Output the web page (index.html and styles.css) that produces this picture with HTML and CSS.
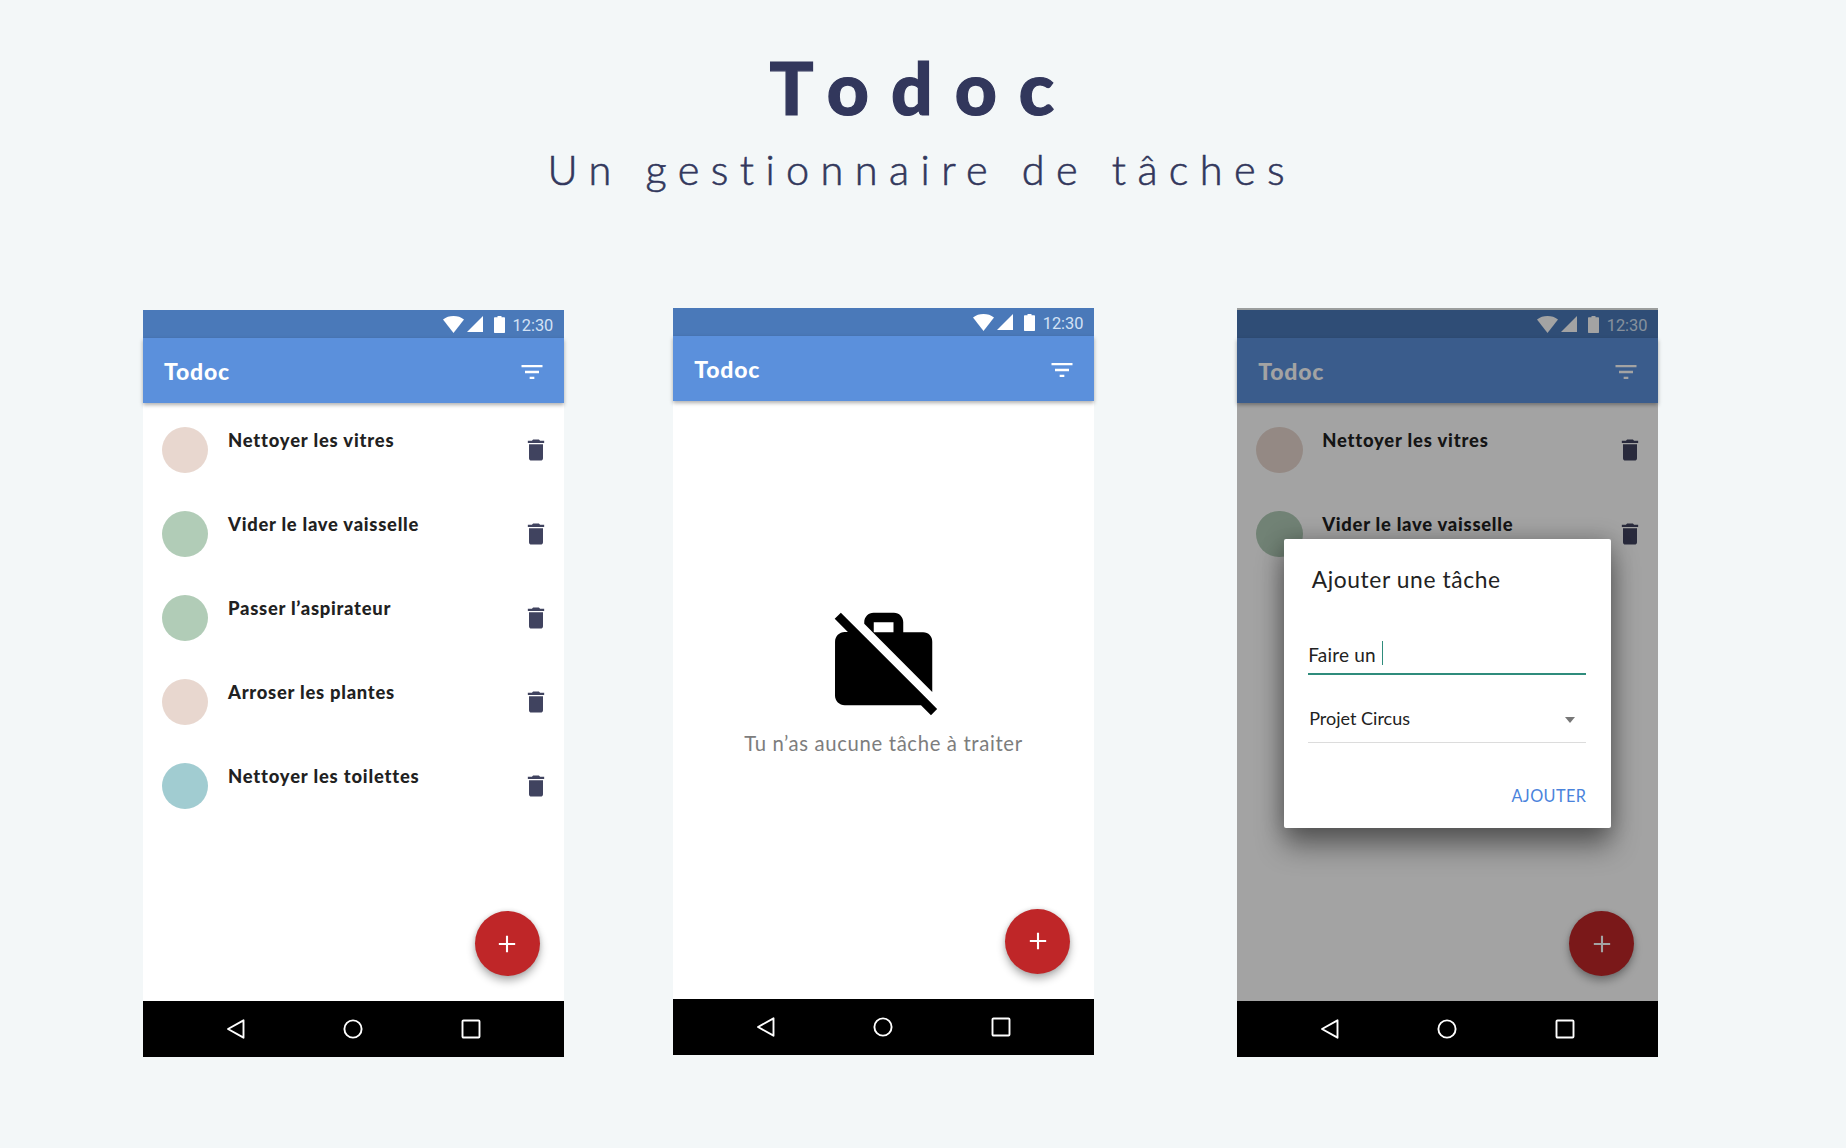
FILE: index.html
```html
<!DOCTYPE html>
<html lang="fr">
<head>
<meta charset="utf-8">
<title>Todoc</title>
<link rel="stylesheet" href="styles.css">
</head>
<body>
<svg class="sprite" aria-hidden="true">
  <symbol id="wifi" viewBox="0 0 21 17"><path d="M0 3.400C3 1.200 6.600 0 10.500 0S18 1.200 21 3.400L10.500 17z"/></symbol>
  <symbol id="signal" viewBox="0 0 16 16"><path d="M0 16H16V0z"/></symbol>
  <symbol id="battery" viewBox="0 0 11 17"><path d="M3.500 0h4v1.200H10.300a.7.7 0 0 1 .7.7V16.300a.7.7 0 0 1-.7.7H.7a.7.7 0 0 1-.7-.7V1.900a.7.7 0 0 1 .7-.7h2.800z"/></symbol>
  <symbol id="filter" viewBox="0 0 24 24"><path d="M10 18h4v-2h-4v2zM3 6v2h18V6H3zm3 7h12v-2H6v2z"/></symbol>
  <symbol id="trash" viewBox="0 0 24 24"><path d="M6 19c0 1.100.9 2 2 2h8c1.100 0 2-.9 2-2V7H6v12zM19 4h-3.500l-1-1h-5l-1 1H5v2h14V4z"/></symbol>
  <symbol id="plus" viewBox="0 0 24 24"><path d="M19 12.900h-6.100V19h-1.800v-6.100H5v-1.800h6.100V5h1.800v6.100H19z"/></symbol>
  <symbol id="back" viewBox="0 0 20 22"><path d="M17.500 2.300V19.700L2 11z"/></symbol>
  <symbol id="home" viewBox="0 0 20 20"><circle cx="10" cy="10" r="8.600"/></symbol>
  <symbol id="recent" viewBox="0 0 20 20"><rect x="1.500" y="1.500" width="17" height="17" rx="1"/></symbol>
  <symbol id="work-off" viewBox="0 0 24 24"><path d="M23 21.740l-1.460-1.460L7.210 5.950 3.250 1.990 1.990 3.250l2.700 2.700h-.64c-1.110 0-1.990.89-1.990 2l-.01 11c0 1.110.89 2 2 2h15.640L21.740 23 23 21.740zM22 7.950c.05-1.110-.84-2-1.950-1.950h-4V3.950c0-1.110-.89-2-2-1.950h-4c-1.110-.05-2 .84-2 1.950v.32l13.950 14V7.950zM14.050 6H10V3.950h4.050V6z"/></symbol>
</svg>

<header class="hero">
  <h1 class="hero-title">Todoc</h1>
  <p class="hero-subtitle">Un gestionnaire de tâches</p>
</header>

<main class="screens">
  <section class="phone phone-list">
    <div class="status"><svg class="wifi"><use href="#wifi"/></svg><svg class="signal"><use href="#signal"/></svg><svg class="battery"><use href="#battery"/></svg><span class="time">12:30</span></div>
    <div class="appbar"><span class="app-title">Todoc</span><svg class="icon"><use href="#filter"/></svg></div>
    <div class="content">
      <ul class="tasks">
        <li class="task"><i class="dot rose"></i><span class="label wide">Nettoyer les vitres</span><svg class="icon"><use href="#trash"/></svg></li>
        <li class="task"><i class="dot green"></i><span class="label">Vider le lave vaisselle</span><svg class="icon"><use href="#trash"/></svg></li>
        <li class="task"><i class="dot green"></i><span class="label">Passer l’aspirateur</span><svg class="icon"><use href="#trash"/></svg></li>
        <li class="task"><i class="dot rose"></i><span class="label">Arroser les plantes</span><svg class="icon"><use href="#trash"/></svg></li>
        <li class="task"><i class="dot blue"></i><span class="label wide">Nettoyer les toilettes</span><svg class="icon"><use href="#trash"/></svg></li>
      </ul>
      <div class="fab"><svg class="icon"><use href="#plus"/></svg></div>
    </div>
    <div class="navbar"><svg class="back"><use href="#back"/></svg><svg class="home"><use href="#home"/></svg><svg class="recent"><use href="#recent"/></svg></div>
  </section>

  <section class="phone phone-empty">
    <div class="status"><svg class="wifi"><use href="#wifi"/></svg><svg class="signal"><use href="#signal"/></svg><svg class="battery"><use href="#battery"/></svg><span class="time">12:30</span></div>
    <div class="appbar"><span class="app-title">Todoc</span><svg class="icon"><use href="#filter"/></svg></div>
    <div class="content">
      <div class="empty"><svg class="empty-icon"><use href="#work-off"/></svg><span class="empty-text">Tu n’as aucune tâche à traiter</span></div>
      <div class="fab"><svg class="icon"><use href="#plus"/></svg></div>
    </div>
    <div class="navbar"><svg class="back"><use href="#back"/></svg><svg class="home"><use href="#home"/></svg><svg class="recent"><use href="#recent"/></svg></div>
  </section>

  <section class="phone phone-dialog">
    <div class="status"><svg class="wifi"><use href="#wifi"/></svg><svg class="signal"><use href="#signal"/></svg><svg class="battery"><use href="#battery"/></svg><span class="time">12:30</span></div>
    <div class="appbar"><span class="app-title">Todoc</span><svg class="icon"><use href="#filter"/></svg></div>
    <div class="content">
      <ul class="tasks">
        <li class="task"><i class="dot rose"></i><span class="label wide">Nettoyer les vitres</span><svg class="icon"><use href="#trash"/></svg></li>
        <li class="task"><i class="dot green"></i><span class="label">Vider le lave vaisselle</span><svg class="icon"><use href="#trash"/></svg></li>
      </ul>
      <div class="fab"><svg class="icon"><use href="#plus"/></svg></div>
    </div>
    <div class="navbar"><svg class="back"><use href="#back"/></svg><svg class="home"><use href="#home"/></svg><svg class="recent"><use href="#recent"/></svg></div>
    <div class="scrim">
      <div class="dialog">
        <h2 class="dialog-title">Ajouter une tâche</h2>
        <div class="field"><span class="field-text">Faire un</span><i class="caret"></i></div>
        <div class="select"><span class="select-text">Projet Circus</span><i class="arrow"></i></div>
        <div class="actions"><span class="action">AJOUTER</span></div>
      </div>
    </div>
  </section>
</main>
</body>
</html>
```
FILE: styles.css
```css
* { box-sizing: border-box; }
body {
  margin: 0;
  height: 1148px;
  overflow: hidden;
  background: #f3f7f8;
  font-family: Lato, "Open Sans", sans-serif;
  color: #222;
}
svg { display: block; flex: none; fill: currentColor; }
.sprite { display: none; }

.hero {
  height: 308px;
  padding-top: 43px;
  display: flex;
  flex-direction: column;
  color: #32375c;
  white-space: nowrap;
}
.hero-title {
  margin: 0 0 0 769.500px;
  font-size: 73px;
  line-height: 88px;
  font-weight: 900;
  letter-spacing: 22px;
  -webkit-text-stroke: 1.200px currentColor;
}
.hero-subtitle {
  margin: 14px 0 0 547.500px;
  font-size: 41.500px;
  line-height: 48px;
  font-weight: 300;
  letter-spacing: 11.400px;
  -webkit-text-stroke: .6px currentColor;
}

.screens { display: flex; padding-left: 143px; align-items: flex-start; }
.phone {
  position: relative;
  width: 420.500px;
  height: 747px;
  margin-top: 2px;
  display: flex;
  flex-direction: column;
  background: #fff;
}
.phone-empty { margin: 0 0 0 109.700px; }
.phone-dialog { margin-left: 143.500px; }

.status {
  height: 28px;
  display: flex;
  align-items: center;
  justify-content: flex-end;
  padding-right: 9px;
  background: #4a79b9;
  color: #fff;
}
.wifi { width: 21px; height: 17px; margin-right: 3px; }
.signal { width: 16px; height: 16px; margin-right: 10.500px; }
.battery { width: 11px; height: 17px; margin-right: 8px; }
.time {
  width: 42px;
  font: 400 16.400px/28px Roboto, sans-serif;
  color: #d3e2f5;
  padding-top: 3px;
}
.appbar {
  position: relative;
  height: 65.300px;
  display: flex;
  align-items: center;
  justify-content: space-between;
  padding: 2px 17.500px 0 21px;
  background: #5b90dc;
  color: #fff;
  box-shadow: 0 2px 4px rgba(0, 0, 0, .32);
}
.app-title {
  padding-bottom: 1px;
  font-size: 23px;
  font-weight: 900;
  line-height: 30px;
  letter-spacing: .8px;
}
.icon { width: 28px; height: 28px; }

.content { position: relative; flex: 1; }
.tasks { margin: 0; padding: 23.400px 14px 0 18.800px; list-style: none; }
.task {
  height: 84px;
  display: flex;
  align-items: flex-start;
  color: #40435f;
}
.dot { width: 46.600px; height: 46.600px; border-radius: 50%; }
.rose { background: #e8d7cf; }
.green { background: #b1ccb7; }
.blue { background: #a1ccd1; }
.label {
  flex: 1;
  margin-left: 19.600px;
  font-size: 18.400px;
  line-height: 24px;
  padding-top: 1px;
  font-weight: 900;
  letter-spacing: .74px;
  color: #212121;
  white-space: nowrap;
}
.wide { letter-spacing: .82px; }
.task .icon { margin-top: 9.300px; }
.fab {
  position: absolute;
  right: 23.500px;
  bottom: 24.700px;
  width: 65.300px;
  height: 65.300px;
  border-radius: 50%;
  display: grid;
  place-items: center;
  background: #bf2628;
  color: #fff;
  box-shadow: 0 5px 8px rgba(0, 0, 0, .3), 0 0 4px rgba(0, 0, 0, .12);
}
.navbar {
  height: 56px;
  display: flex;
  align-items: center;
  background: #000;
  color: #fff;
}
.navbar svg { fill: none; stroke: currentColor; stroke-width: 1.900; stroke-linejoin: round; }
.back { width: 20px; height: 22px; margin-left: 83px; }
.home { width: 20px; height: 20px; margin-left: 97.300px; }
.recent { width: 20px; height: 20px; margin-left: 98px; }
.phone-empty { height: 746.500px; margin-top: 0; }

.empty {
  padding-top: 201.500px;
  display: flex;
  flex-direction: column;
  align-items: center;
  color: #000;
}
.empty-icon { width: 117px; height: 117px; }
.empty-text {
  margin-top: 11.500px;
  font-size: 20.300px;
  line-height: 24px;
  letter-spacing: .65px;
  color: #7d7d7d;
  white-space: nowrap;
}

.scrim {
  position: absolute;
  inset: -2px 0 56px;
  background: rgba(0, 0, 0, .36);
  padding: 231px 0 0 47px;
  overflow: hidden;
}
.dialog {
  width: 326.700px;
  height: 289px;
  border-radius: 2px;
  background: #fff;
  padding: 0 24.500px 0 24px;
  box-shadow: 0 18px 28px rgba(0, 0, 0, .42), 0 0 22px rgba(0, 0, 0, .24);
  white-space: nowrap;
}
.dialog-title {
  margin: 0;
  padding: 26px 0 0 3.500px;
  font-size: 22.800px;
  line-height: 28px;
  font-weight: 400;
  letter-spacing: .6px;
}
.field {
  height: 82px;
  display: flex;
  align-items: flex-end;
  padding-bottom: 6px;
  border-bottom: 2px solid #2f8c7c;
}
.field-text { font-size: 19px; line-height: 24px; letter-spacing: .2px; }
.caret { width: 1.500px; height: 24px; margin: 0 0 2px 6px; background: #2f8c7c; }
.select {
  height: 68px;
  display: flex;
  align-items: flex-start;
  justify-content: space-between;
  padding: 31px 11.500px 0 1px;
  border-bottom: 1px solid #dcdcdc;
}
.select-text { font-size: 18px; line-height: 24px; }
.arrow { margin-top: 11px; border: 5.500px solid transparent; border-top: 6px solid #777; border-bottom: 0; }
.actions { display: flex; justify-content: flex-end; padding-top: 41px; }
.action { font-size: 16.300px; line-height: 24px; letter-spacing: .4px; color: #4a83dc; }
```
